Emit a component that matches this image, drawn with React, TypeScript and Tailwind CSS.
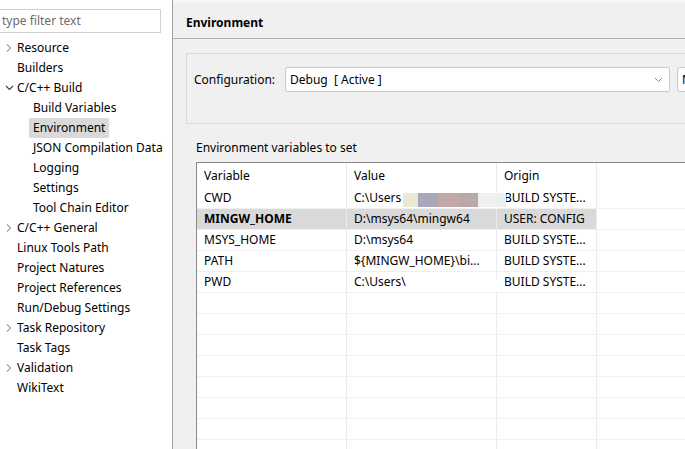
import React from 'react';

const FONT = "font-['Noto_Sans','Noto_Sans_CJK_SC',sans-serif]";

type TreeItem = { label: string; level: 0 | 1; chevron?: 'right' | 'down'; selected?: boolean };

const TREE: TreeItem[] = [
  { label: 'Resource', level: 0, chevron: 'right' },
  { label: 'Builders', level: 0 },
  { label: 'C/C++ Build', level: 0, chevron: 'down' },
  { label: 'Build Variables', level: 1 },
  { label: 'Environment', level: 1, selected: true },
  { label: 'JSON Compilation Database', level: 1 },
  { label: 'Logging', level: 1 },
  { label: 'Settings', level: 1 },
  { label: 'Tool Chain Editor', level: 1 },
  { label: 'C/C++ General', level: 0, chevron: 'right' },
  { label: 'Linux Tools Path', level: 0 },
  { label: 'Project Natures', level: 0 },
  { label: 'Project References', level: 0 },
  { label: 'Run/Debug Settings', level: 0 },
  { label: 'Task Repository', level: 0, chevron: 'right' },
  { label: 'Task Tags', level: 0 },
  { label: 'Validation', level: 0, chevron: 'right' },
  { label: 'WikiText', level: 0 },
];

const ROWS = [
  { name: 'CWD', value: 'C:\\Users', origin: 'BUILD SYSTE...' },
  { name: 'MINGW_HOME', value: 'D:\\msys64\\mingw64', origin: 'USER: CONFIG', selected: true },
  { name: 'MSYS_HOME', value: 'D:\\msys64', origin: 'BUILD SYSTE...' },
  { name: 'PATH', value: '${MINGW_HOME}\\bi...', origin: 'BUILD SYSTE...' },
  { name: 'PWD', value: 'C:\\Users\\', origin: 'BUILD SYSTE...' },
];

function Chevron({ dir }: { dir: 'right' | 'down' }) {
  return dir === 'right' ? (
    <svg width="8" height="10" viewBox="0 0 8 10" className="text-[#a0a0a0]">
      <path d="M2 1.5 L5.5 5 L2 8.5" fill="none" stroke="currentColor" strokeWidth="1.1" />
    </svg>
  ) : (
    <svg width="9" height="8" viewBox="0 0 9 8" className="text-[#404040]">
      <path d="M1 2 L4.5 5.5 L8 2" fill="none" stroke="currentColor" strokeWidth="1.1" />
    </svg>
  );
}

function Sidebar() {
  return (
    <div className="w-[173px] shrink-0 bg-white border-r border-[#a0a0a0] flex flex-col overflow-hidden">
      <div className="pt-[9px] pr-[11px]">
        <div className="ml-[-10px] h-[24px] border border-[#d0d0d0] bg-white flex items-center pl-[11px] text-[12px] text-[#6d6d6d]">
          type filter text
        </div>
      </div>
      {/* tree viewport clips a bit before the panel edge */}
      <div className="pt-[5px] w-[163px] overflow-hidden flex flex-col">
        {TREE.map((t) => (
          <div key={t.label} className="h-[20px] flex items-center whitespace-nowrap text-[12px] text-black">
            <div className="w-[17px] shrink-0 flex justify-center pl-[1px]">
              {t.level === 0 && t.chevron ? <Chevron dir={t.chevron} /> : null}
            </div>
            {t.level === 1 && <div className="w-[16px] shrink-0" />}
            <span className={t.selected ? 'bg-[#d9d9d9] rounded-[2px] px-[4px] h-[20px] leading-[20px] -ml-[4px]' : ''}>
              {t.label}
            </span>
          </div>
        ))}
      </div>
    </div>
  );
}

function EnvTable() {
  const cols = 'w-[150px] shrink-0 border-r border-[#ebebeb] pl-[7px] flex items-center overflow-hidden whitespace-nowrap';
  return (
    <div className="ml-[23px] w-[600px] flex-1 border-l border-t border-[#8a8a8a] bg-white flex flex-col">
      <div className="h-[25px] flex text-[12px]">
        <div className={cols}>Variable</div>
        <div className={cols}>Value</div>
        <div className="w-[100px] shrink-0 border-r border-[#ebebeb] pl-[7px] flex items-center">Origin</div>
        <div className="flex-1" />
      </div>
      {ROWS.map((r) => (
        <div key={r.name} className="relative h-[21px] flex text-[12px] border-b border-[#f0f0f0]">
          <div className={`${cols} ${r.selected ? 'bg-[#d9d9d9] font-bold' : ''}`}>{r.name}</div>
          <div className={`${cols} ${r.selected ? 'bg-[#d9d9d9]' : ''}`}>{r.value}</div>
          <div className={`w-[100px] shrink-0 border-r border-[#ebebeb] pl-[7px] flex items-center overflow-hidden whitespace-nowrap ${r.selected ? 'bg-[#d9d9d9]' : ''}`}>
            {r.origin}
          </div>
          <div className="flex-1" />
          {r.name === 'CWD' && (
            <>
              <div className="absolute left-[206px] top-[5px] w-[15px] h-[14px] bg-[#ebe9d6]" />
              <div className="absolute left-[221px] top-[5px] w-[20px] h-[14px] bg-[#a9a8bb]" />
              <div className="absolute left-[241px] top-[5px] w-[20px] h-[14px] bg-[#c3a9a7]" />
              <div className="absolute left-[261px] top-[5px] w-[20px] h-[14px] bg-[#b9a9a9]" />
              <div className="absolute left-[281px] top-[5px] w-[28px] h-[14px] bg-[#efefef]" />
            </>
          )}
          {r.name === 'PWD' && (
            <div className="absolute left-[222px] top-[7px] w-[86px] h-[12px] bg-white" />
          )}
        </div>
      ))}
      {Array.from({ length: 8 }).map((_, i) => (
        <div key={i} className="h-[21px] flex border-b border-[#f0f0f0]">
          <div className="w-[150px] shrink-0 border-r border-[#ebebeb]" />
          <div className="w-[150px] shrink-0 border-r border-[#ebebeb]" />
          <div className="w-[100px] shrink-0 border-r border-[#ebebeb]" />
          <div className="flex-1" />
        </div>
      ))}
    </div>
  );
}

export default function App() {
  return (
    <div className={`w-[685px] h-[449px] flex overflow-hidden bg-[#f0f0f0] text-black ${FONT}`}>
      <Sidebar />
      <div className="flex-1 flex flex-col overflow-hidden">
        <div className="h-[39px] shrink-0 border-t-[3px] border-t-[#f7f7f7] border-b border-b-[#b0b0b0] flex items-center pl-[13px] pt-[4px]">
          <span className="text-[12px] font-bold">Environment</span>
        </div>
        <div className="mt-[14px] ml-[13px] w-[540px] shrink-0 h-[71px] border border-[#d9d9d9] flex items-start pt-[13px] pl-[7px]">
          <div className="w-[91px] shrink-0 h-[25px] flex items-center text-[12px]">Configuration:</div>
          <div className="w-[385px] shrink-0 h-[25px] bg-white border border-[#c9c9c9] rounded-[2px] flex items-center pl-[4px] pr-[6px] text-[12px]">
            <span className="flex-1 whitespace-pre">Debug  [ Active ]</span>
            <svg width="9" height="6" viewBox="0 0 9 6" className="text-[#8a8a8a]">
              <path d="M1 1 L4.5 4.5 L8 1" fill="none" stroke="currentColor" strokeWidth="1" />
            </svg>
          </div>
          <div className="ml-[7px] w-[120px] shrink-0 h-[25px] bg-[#fdfdfd] border border-[#c9c9c9] rounded-[3px] flex items-center pl-[4px] text-[12px] whitespace-nowrap">
            Manage Configurations...
          </div>
        </div>
        <div className="h-[20px] mt-[14px] shrink-0 flex items-center pl-[23px] text-[12px]">Environment variables to set</div>
        <div className="mt-[4px] flex-1 flex flex-col min-h-0">
          <EnvTable />
        </div>
      </div>
    </div>
  );
}
